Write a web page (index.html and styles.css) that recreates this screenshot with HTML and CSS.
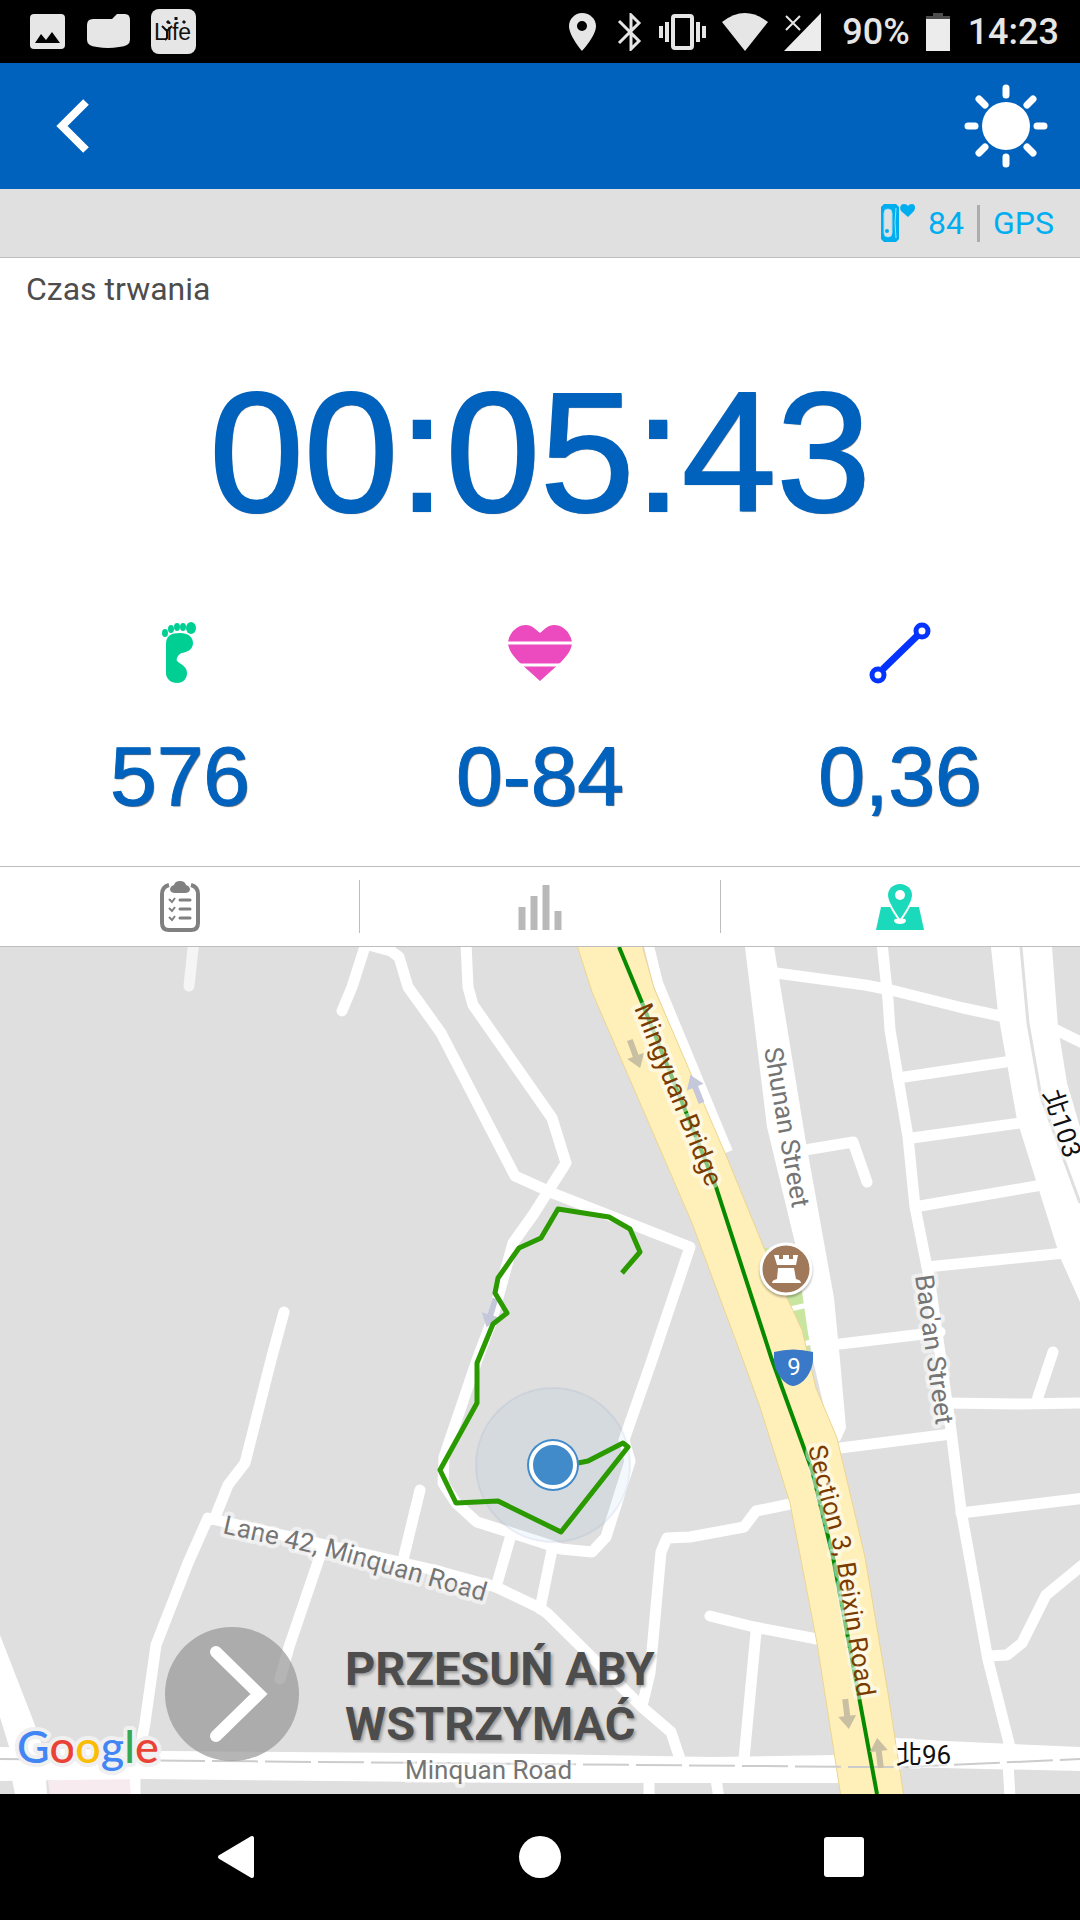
FILE: index.html
```
<!DOCTYPE html>
<html lang="pl">

<head>
    <meta charset="UTF-8">
    <meta name="viewport" content="width=device-width, initial-scale=1.0">
    <title>Czas trwania</title>
    <link rel="stylesheet" href="styles.css">
</head>

<body>

    <div class="status-bar">
        <div class="status-left">
            <svg width="36" height="36" viewBox="0 0 36 36">
                <rect x="0" y="0" width="35" height="35" rx="4" fill="#e6e6e6" />
                <path d="M5 29L11 20L16 26L22 18L30 29Z" fill="#000" />
            </svg>
            <svg width="43" height="36" viewBox="0 0 43 36">
                <path d="M6 5H25L30 0H38Q43 0 43 6V26Q43 32 32 33Q21 35 10 33Q0 32 0 26V11Q0 5 6 5Z" fill="#e6e6e6" />
            </svg>
            <svg width="45" height="45" viewBox="0 0 45 45">
                <rect x="0" y="0" width="45" height="45" rx="8" fill="#e6e6e6" />
                <text class="app-name" x="3" y="31">Life</text>
                <path d="M11 17L16 22L21 17M16 20V29L14 31" fill="none" stroke="#111" stroke-width="2" />
                <path d="M18 14L16 12M25 11V8M32 14L34 12" fill="none" stroke="#111" stroke-width="3" />
            </svg>
        </div>
        <div class="status-right">
            <svg width="32" height="38" viewBox="0 0 32 38">
                <path fill-rule="evenodd" d="M13 0C6 0 0 6 0 13C0 23 13 38 13 38S27 23 27 13C27 6 21 0 13 0ZM13 8A5 5 0 1 1 13 18A5 5 0 1 1 13 8Z" fill="#e6e6e6" />
            </svg>
            <svg width="26" height="38" viewBox="0 0 26 38">
                <path d="M2 8L22 28L14 36V2L22 10L2 30" fill="none" stroke="#e6e6e6" stroke-width="3" />
            </svg>
            <svg width="47" height="36" viewBox="0 0 47 36">
                <rect x="14" y="2" width="19" height="32" rx="2" fill="none" stroke="#e6e6e6" stroke-width="4" />
                <path d="M2 12V24M8 8V28M39 8V28M45 12V24" stroke="#e6e6e6" stroke-width="4" />
            </svg>
            <svg width="46" height="38" viewBox="0 0 46 38">
                <path d="M0 9Q23 -9 46 9L23 38Z" fill="#e6e6e6" />
            </svg>
            <svg width="42" height="38" viewBox="0 0 42 38">
                <path d="M37 0V38H0Z" fill="#ececec" />
                <path d="M2 3L16 17M16 3L2 17" stroke="#e6e6e6" stroke-width="2" />
            </svg>
            <span>90%</span>
            <svg width="26" height="38" viewBox="0 0 26 38">
                <path d="M7 0H17V3H24V7H0V3H7Z" fill="#4d4d4d" />
                <rect x="0" y="6" width="24" height="32" fill="#ececec" />
            </svg>
            <span>14:23</span>
        </div>
    </div>

    <header class="header">
        <button class="icon-button" aria-label="Wstecz">
            <svg width="34" height="56" viewBox="0 0 34 56">
                <path d="M30 4L6 28L30 52" fill="none" stroke="#fff" stroke-width="8" />
            </svg>
        </button>
        <button class="icon-button" aria-label="Jasność">
            <svg width="84" height="84" viewBox="-42 -42 84 84">
                <circle r="24" fill="#fff" />
                <path d="M0 -31V-38M0 31V38M-31 0H-38M31 0H38M-21 -21L-27 -27M21 -21L27 -27M-21 21L-27 27M21 21L27 27" stroke="#fff" stroke-width="7" stroke-linecap="round" />
            </svg>
        </button>
    </header>

    <div class="device-bar">
        <svg width="34" height="38" viewBox="0 0 34 38">
            <path d="M3 0H15L18 3V35L15 38H3L0 35V3Z" fill="#00aef0" />
            <rect x="3" y="5" width="8" height="28" rx="4" fill="#e0e0e0" stroke="#9adcf3" stroke-width="1" />
            <circle cx="6" cy="27" r="2" fill="#00aef0" />
            <path d="M15 4Q13 19 15 34" fill="none" stroke="#a5dff3" stroke-width="1" />
            <path d="M27 13L20 7C18 3 20 0 23 0Q26 0 27 2Q28 0 31 0C34 0 35 4 33 7Z" fill="#00aef0" />
        </svg>
        <span>84</span>
        <span class="divider"></span>
        <span>GPS</span>
    </div>

    <section class="summary">
        <h1>Czas trwania</h1>
        <div class="timer">00:05:43</div>
        <div class="metrics">
            <div class="metric">
                <svg width="62" height="62" viewBox="0 0 62 62">
                    <g fill="#00cf94">
                        <ellipse cx="16" cy="11" rx="3" ry="4" />
                        <ellipse cx="22" cy="7" rx="3" ry="4" />
                        <ellipse cx="28" cy="5" rx="3" ry="4" />
                        <ellipse cx="34" cy="5" rx="3" ry="4" />
                        <ellipse cx="42" cy="6" rx="5" ry="6" />
                        <path d="M17 22C17 14 22 11 31 11C39 11 44 15 44 21C44 27 39 30 33 31C29 32 27 37 28 39C31 42 38 44 38 51C38 57 34 61 28 61C22 61 17 57 17 51Z" />
                    </g>
                </svg>
                <span>576</span>
            </div>
            <div class="metric">
                <svg width="64" height="62" viewBox="0 0 64 62">
                    <path d="M32 59L11 40C3 32 0 26 0 20C2 9 10 3 18 3C24 3 27 7 32 11C37 7 40 3 46 3C54 3 62 9 64 20C64 26 61 32 53 40Z" fill="#ec4bc0" />
                    <path d="M0 21H64M0 43H64" stroke="#fff" stroke-width="3" />
                </svg>
                <span>0-84</span>
            </div>
            <div class="metric">
                <svg width="62" height="62" viewBox="0 0 62 62">
                    <path d="M14 47L48 14" stroke="#0433ff" stroke-width="7" />
                    <circle cx="9" cy="53" r="6" fill="#fff" stroke="#0433ff" stroke-width="5" />
                    <circle cx="53" cy="9" r="6" fill="#fff" stroke="#0433ff" stroke-width="5" />
                </svg>
                <span>0,36</span>
            </div>
        </div>
    </section>

    <nav class="tabs">
        <button aria-label="Podsumowanie">
            <svg width="40" height="52" viewBox="0 0 40 52">
                <path d="M9 4Q2 6 2 13V42Q2 49 9 49H31Q38 49 38 42V13Q38 6 31 4" fill="none" stroke="#808080" stroke-width="4" />
                <path d="M14 4Q15 0 20 0T26 4Q30 5 30 9Q29 12 25 12H15Q11 12 10 9Q10 5 14 4Z" fill="#808080" />
                <path d="M20 19H30M20 28H30M20 37H30" stroke="#808080" stroke-width="3" stroke-linecap="round" />
                <path d="M9 18L12 21L15 17M9 27L12 30L15 26M9 36L12 39L15 35" fill="none" stroke="#808080" stroke-width="2" />
            </svg>
        </button>
        <button aria-label="Wykres">
            <svg width="44" height="46" viewBox="0 0 44 46">
                <path d="M4 23V46M16 12V46M28 1V46M40 27V46" stroke="#b9b9b9" stroke-width="7" />
            </svg>
        </button>
        <button aria-label="Mapa">
            <svg width="48" height="46" viewBox="0 0 48 46">
                <path d="M5 23H43L48 46H0Z" fill="#1adabb" />
                <path d="M24 0C17 0 12 5 12 11C12 19 24 35 24 35S36 19 36 11C36 5 31 0 24 0Z" fill="#1adabb" stroke="#fff" stroke-width="4" paint-order="stroke" />
                <circle cx="24" cy="11" r="5" fill="#fff" />
                <path d="M18 37Q18 34 22 35L24 36L26 35Q30 34 30 37Q29 40 24 40T18 37Z" fill="#fff" />
            </svg>
        </button>
    </nav>

    <main class="map">
        <svg class="map-canvas" viewBox="0 0 1080 847" preserveAspectRatio="xMidYMid slice">
            <defs>
                <path id="section3" d="M808 500Q817 540 827 576T840 640L860 765" />
                <path id="lane42" d="M222 586L325 609L500 659" />
            </defs>

            <!-- local roads -->
            <g class="road">
                <path class="faint" d="M194 -8L189 39" />
                <path d="M368 -10L352 40L342 64" />
                <path d="M365 -3L391 4L399 10L408 40L441 86L515 229L555 247L690 300L652 413L624 493L630 514L606 590L592 605L561 602L540 595L477 575L456 556L443 536L444 510L477 413L491 376L513 296L533 268L566 216L552 171L473 58L468 40L466 -4" />
                <path d="M284 365L271 413L245 516L228 538L216 568" />
                <path d="M135 860V830L145 776L156 698L188 616L208 571L434 623L496 640L540 661L548 667L643 761L671 785L680 812" />
                <path d="M511 588L496 640M552 603L540 662M420 543L403 613M322 603L289 700L280 732" />
                <path d="M795 556L756 564L744 580L690 590L667 591L661 605L650 726L643 755" />
                <path d="M710 669L754 680L817 692M756 685L744 812" />
                <path d="M649 832V850L640 853M716 832L719 852M1008 815L1010 852" />
                <path d="M776 26L865 38L891 43L963 61L1005 70M1050 80L1085 97" />
                <path d="M882 -4L888 53L890 83L908 190L915 260L929 330L941 413L951 483L961 563L988 713L1010 800" />
                <path d="M898 131L1005 115M912 191L1020 176M920 259L1042 238M927 320L1064 306" />
                <path d="M805 203L853 195L867 235M840 397L940 385M945 456L1019 457L1085 456M1036 456L1053 405" />
                <path d="M832 502L951 487M961 566L1085 551M989 709L1007 708L1022 696L1046 648L1085 616" />
            </g>

            <!-- wide streets -->
            <path class="park" d="M764 301H800L812 420H800Z" />
            <path d="M786 363L812 357M804 397L818 393" class="street-line" />
            <path class="street" d="M745 0H774L805 190L834 351L840 413L846 481L840 494L832 495L813 413L808 386L795 296L767 180Z" />
            <path class="street" d="M991 0H1052L1058 80L1067 136L1080 180V355L1060 310L1017 173L998 66Z" />
            <path d="M1021 0L1028 76L1041 150L1080 256" class="median" />
            <path class="street" d="M0 688L33 773L44 803H10L0 770ZM12 832H46L47 847H15Z" />
            <path class="building" d="M48 834L68 831H129L131 847H50Z" />
            <path class="street" d="M0 800L162 804L540 807L712 810L895 807V791L946 794L1080 800V824L898 820L839 836L540 836L138 832L0 834Z" />

            <!-- highway -->
            <path d="M648 -5L658 36L728 205" class="street-line wide" />
            <path class="highway" d="M577 -2L592 45L692 276L743 413L760 460L790 556L817 696L841 850H904L888 746L865 610L837 491L816 441L802 383L764 301L728 213L654 41L642 -2Z" />
            <path class="railway" d="M0 812L540 817L857 820L905 820L1080 812" />
            <path class="metro" d="M619 0L643 58L716 240L772 413L812 523L833 610L872 820L877 847" />

            <!-- one-way arrows -->
            <g class="arrow">
                <path d="M-3 -15H3V2H9L0 15L-9 2H-3Z" transform="translate(635 107) rotate(-20)" />
                <path class="violet" d="M-3 -15H3V2H9L0 15L-9 2H-3Z" transform="translate(696 142) rotate(158)" />
                <path class="violet" d="M-3 -15H3V2H9L0 15L-9 2H-3Z" transform="translate(491 366) rotate(17)" />
                <path d="M-3 -15H3V2H9L0 15L-9 2H-3Z" transform="translate(847 767) rotate(-7)" />
                <path d="M-3 -15H3V2H9L0 15L-9 2H-3Z" transform="translate(879 806) rotate(173)" />
            </g>

            <!-- street names -->
            <g class="label">
                <text class="brown" transform="translate(634 61) rotate(68)">Mingyuan Bridge</text>
                <text transform="translate(764 102) rotate(80)">Shunan Street</text>
                <text transform="translate(915 329) rotate(82)">Bao'an Street</text>
                <text class="brown"><textPath href="#section3">Section 3, Beixin Road</textPath></text>
                <text><textPath href="#lane42">Lane 42, Minquan Road</textPath></text>
                <text x="405" y="832">Minquan Road</text>
                <text class="route" x="896" y="817">北96</text>
                <text class="route" transform="translate(1043 146) rotate(72)">北103</text>
            </g>

            <!-- places -->
            <circle class="poi" cx="786" cy="322" r="25" />
            <path d="M774 308H779V312H783V308H789V312H793V308H798L796 318H777ZM778 321H794L796 332Q801 333 801 336H772Q772 333 777 332Z" fill="#fff" />
            <path d="M774 405Q793 400 813 405V412C813 425 802 439 793 439C785 439 774 425 774 412Z" fill="#3a78c8" />
            <text class="shield-text" x="794" y="428">9</text>

            <!-- recorded track and position -->
            <circle class="accuracy" cx="553" cy="518" r="77" />
            <path class="track" d="M622 326L640 305L630 282L609 270L558 262L541 291L519 301L498 331L495 346L507 366L493 377L477 416V456L440 523L456 556L498 554L561 585L628 500L623 496L588 514L578 516" />
            <circle cx="553" cy="518" r="26" fill="#428bca" />
            <circle cx="553" cy="518" r="22" fill="#428bca" stroke="#fff" stroke-width="4" />

            <text class="google" x="17" y="816"><tspan class="g-blue">G</tspan><tspan class="g-red">o</tspan><tspan class="g-yellow">o</tspan><tspan class="g-blue">g</tspan><tspan class="g-green">l</tspan><tspan class="g-red">e</tspan></text>
        </svg>

        <div class="slide">
            <button class="slide-button" aria-label="Przesuń aby wstrzymać">
                <svg width="134" height="134" viewBox="0 0 134 134">
                    <path d="M51 25L94 67L51 109" fill="none" stroke="#fff" stroke-width="12" stroke-linecap="round" />
                </svg>
            </button>
            <p>PRZESUŃ ABY<br>WSTRZYMAĆ</p>
        </div>
    </main>

    <footer class="nav-bar">
        <button aria-label="Wstecz">
            <svg width="38" height="44" viewBox="0 0 38 44">
                <path d="M3 22L35 3V41Z" fill="#fff" stroke="#fff" stroke-width="4" stroke-linejoin="round" />
            </svg>
        </button>
        <button aria-label="Ekran główny">
            <svg width="42" height="42" viewBox="0 0 42 42">
                <circle cx="21" cy="21" r="21" fill="#fff" />
            </svg>
        </button>
        <button aria-label="Ostatnie">
            <svg width="40" height="40" viewBox="0 0 40 40">
                <rect width="40" height="40" rx="3" fill="#fff" />
            </svg>
        </button>
    </footer>

</body>

</html>
```
FILE: styles.css
```
* {
    box-sizing: border-box;
}

body {
    display: flex;
    flex-direction: column;
    min-height: 100vh;
    margin: 0;
    font-family: Roboto, "Noto Sans CJK TC", sans-serif;
    font-size: 32px;
    color: #4d4d4d;
    background-color: #fff;
}

svg {
    display: block;
}

button {
    display: flex;
    align-items: center;
    justify-content: center;
    padding: 0;
    border: none;
    background: none;
    cursor: pointer;
}

.status-bar {
    display: flex;
    align-items: center;
    justify-content: space-between;
    height: 63px;
    padding: 0 21px 0 30px;
    background-color: #000;
    color: #e6e6e6;
    font-size: 36px;
    font-weight: 500;
}

.status-left,
.status-right {
    display: flex;
    align-items: center;
}

.status-left {
    gap: 21px;
}

.status-right {
    gap: 16px;
}

.app-name {
    font-family: "Liberation Sans", sans-serif;
    font-size: 23px;
    fill: #111;
}

.header {
    display: flex;
    align-items: center;
    justify-content: space-between;
    height: 126px;
    padding: 0 32px 0 56px;
    background-color: #0062bd;
}

.device-bar {
    display: flex;
    align-items: center;
    justify-content: flex-end;
    gap: 13px;
    height: 69px;
    padding-right: 26px;
    background-color: #e0e0e0;
    border-bottom: 1px solid #bdbdbd;
    color: #00aef0;
}

.divider {
    width: 3px;
    height: 37px;
    background-color: #adadad;
}

.summary {
    padding: 12px 0 48px;
}

.summary h1 {
    margin: 0 26px;
    font-size: 32px;
    font-weight: normal;
    line-height: 38px;
}

.timer,
.metric {
    font-family: "Liberation Sans", Arial, sans-serif;
    color: #0062bd;
    text-align: center;
    text-shadow: 1px 1px 1px rgba(0, 0, 0, 0.6);
}

.timer {
    margin-top: 58px;
    font-size: 170px;
    line-height: 172px;
    -webkit-text-stroke: 2px #0062bd;
}

.metrics {
    display: flex;
    margin-top: 84px;
}

.metric {
    display: flex;
    flex: 1;
    flex-direction: column;
    align-items: center;
    gap: 50px;
    font-size: 84px;
    line-height: 84px;
    -webkit-text-stroke: 1px #0062bd;
}

.tabs {
    display: flex;
    align-items: center;
    height: 81px;
    border-top: 1px solid #bdbdbd;
    border-bottom: 1px solid #bdbdbd;
}

.tabs button {
    flex: 1;
    height: 53px;
    border-right: 1px solid #bdbdbd;
}

.tabs button:last-child {
    border-right: none;
}

.map {
    position: relative;
    flex: 1;
    min-height: 600px;
    overflow: hidden;
    background-color: #dfdfdf;
}

.map-canvas {
    position: absolute;
    width: 100%;
    height: 100%;
}

.road path {
    fill: none;
    stroke: #fff;
    stroke-width: 11px;
    stroke-linecap: round;
    stroke-linejoin: round;
}

.road .faint {
    stroke: #f5f5f5;
}

.street {
    fill: #fff;
}

.street-line {
    fill: none;
    stroke: #fff;
    stroke-width: 5px;
}

.wide {
    stroke-width: 10px;
}

.median {
    fill: none;
    stroke: #dfdfdf;
    stroke-width: 3px;
}

.park {
    fill: #c8e6a0;
}

.building {
    fill: #f8ebef;
}

.railway {
    fill: none;
    stroke: #ccc;
    stroke-width: 2px;
    stroke-dasharray: 46 7;
}

.highway {
    fill: #ffefb8;
    stroke: #ecd592;
    stroke-width: 1px;
}

.metro {
    fill: none;
    stroke: #078a00;
    stroke-width: 4px;
}

.arrow path {
    fill: #c9bfa2;
}

.arrow .violet {
    fill: #c5c8da;
}

.label text {
    font-size: 26px;
    fill: #757575;
    stroke: rgba(255, 255, 255, 0.5);
    stroke-width: 8px;
    stroke-linejoin: round;
    paint-order: stroke;
}

.label .brown {
    fill: #7a3b00;
}

.label .route {
    fill: #111;
}

.poi {
    fill: #a0785a;
    stroke: #fff;
    stroke-width: 3px;
    filter: drop-shadow(0 2px 1px rgba(0, 0, 0, 0.3));
}

.shield-text {
    font-size: 24px;
    fill: #fff;
    text-anchor: middle;
}

.accuracy {
    fill: rgba(66, 160, 202, 0.07);
    stroke: rgba(120, 140, 200, 0.12);
    stroke-width: 2px;
}

.track {
    fill: none;
    stroke: #2a9a00;
    stroke-width: 5px;
    stroke-linejoin: round;
}

.google {
    font-family: Lato, sans-serif;
    font-size: 45px;
    font-weight: 500;
    stroke: #f0f0f0;
    stroke-width: 8px;
    stroke-linejoin: round;
    paint-order: stroke;
}

.g-blue {
    fill: #4285f4;
}

.g-red {
    fill: #ea4335;
}

.g-yellow {
    fill: #fbbc05;
}

.g-green {
    fill: #34a853;
}

.slide {
    position: absolute;
    bottom: 33px;
    left: 165px;
    display: flex;
    align-items: center;
    gap: 46px;
}

.slide-button {
    border-radius: 50%;
    background-color: rgba(150, 150, 150, 0.7);
}

.slide p {
    margin: 0;
    padding-top: 4px;
    font-size: 47px;
    font-weight: bold;
    line-height: 55px;
    text-shadow: 2px 2px 3px rgba(0, 0, 0, 0.3);
}

.nav-bar {
    display: flex;
    height: 126px;
    padding: 0 84px;
    background-color: #000;
}

.nav-bar button {
    flex: 1;
}
```
